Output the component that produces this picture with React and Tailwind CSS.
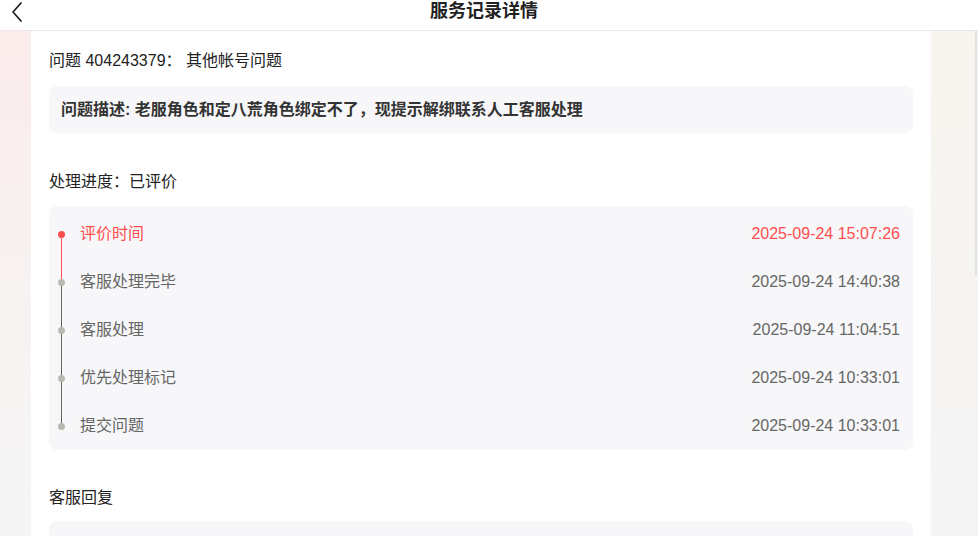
import React from "react";

const steps = [
  { name: "评价时间", time: "2025-09-24 15:07:26", active: true },
  { name: "客服处理完毕", time: "2025-09-24 14:40:38" },
  { name: "客服处理", time: "2025-09-24 11:04:51" },
  { name: "优先处理标记", time: "2025-09-24 10:33:01" },
  { name: "提交问题", time: "2025-09-24 10:33:01" },
];

const font = { fontFamily: '"Liberation Sans", "Noto Sans CJK SC", sans-serif' };

export default function App() {
  return (
    <div
      className="h-[536px] w-[978px] overflow-hidden bg-white text-[#222]"
      style={font}
    >
      <div className="relative flex h-[31px] items-center justify-center border-b border-[#e8e8e8] bg-white">
        <button className="absolute left-[9px] top-[1px] text-[#222]">
          <svg width="16" height="22" viewBox="0 0 16 22" fill="none">
            <path d="M12 2 L4 11 L12 20" stroke="#222" strokeWidth="1.8" strokeLinecap="round" strokeLinejoin="round" />
          </svg>
        </button>
        <h1 className="-mt-[8px] mr-[10px] text-[18px] font-bold text-[#222]">服务记录详情</h1>
      </div>

      <div className="flex h-[505px]">
        <div className="w-[31px] bg-gradient-to-b from-[#fbeceb] via-[#f8f2f2] to-[#f5f5f5]" />
        <div className="w-[900px] bg-white px-[18px] pt-[20px]">
          <p className="text-[16px] leading-[20px] text-[#222]">
            问题 404243379：&nbsp;其他帐号问题
          </p>
          <div className="mt-[15px] flex h-[47px] items-center rounded-[8px] bg-[#f7f7f9] px-[12px]">
            <p className="text-[16px] font-bold text-[#333]">
              问题描述: 老服角色和定八荒角色绑定不了，现提示解绑联系人工客服处理
            </p>
          </div>

          <p className="mt-[39px] text-[16px] leading-[20px] text-[#222]">处理进度：已评价</p>

          <div className="mt-[14px] rounded-[8px] bg-[#f7f7f9] pb-0 pl-[8px] pr-[13px] pt-[4px]">
            {steps.map((s, i) => (
              <div key={i} className="relative flex h-[48px] items-center">
                {i < steps.length - 1 && (
                  <div
                    className={`absolute left-[4px] top-[24px] h-[48px] w-[1px] ${
                      s.active ? "bg-[#ff4d4f]" : "bg-[#666]"
                    }`}
                  />
                )}
                <div
                  className={`relative z-10 ml-[1px] h-[7px] w-[7px] rounded-full ${
                    s.active ? "bg-[#ff4d4f]" : "bg-[#b9b9b4]"
                  }`}
                />
                <span
                  className={`ml-[15px] text-[16px] ${
                    s.active ? "text-[#ff4d4f]" : "text-[#666]"
                  }`}
                >
                  {s.name}
                </span>
                <span
                  className={`ml-auto text-[16px] ${
                    s.active ? "text-[#ff4d4f]" : "text-[#666]"
                  }`}
                >
                  {s.time}
                </span>
              </div>
            ))}
          </div>

          <p className="mt-[38px] text-[16px] leading-[20px] text-[#222]">客服回复</p>
          <div className="mt-[13px] h-[60px] rounded-[8px] bg-[#f7f7f9]" />
        </div>
        <div className="relative flex-1 bg-gradient-to-b from-[#f8f5ef] via-[#f6f4f2] to-[#f5f5f5]">
          <div className="absolute right-[1px] top-0 h-[244px] w-[2px] bg-[#e2e2e2]" />
        </div>
      </div>
    </div>
  );
}
